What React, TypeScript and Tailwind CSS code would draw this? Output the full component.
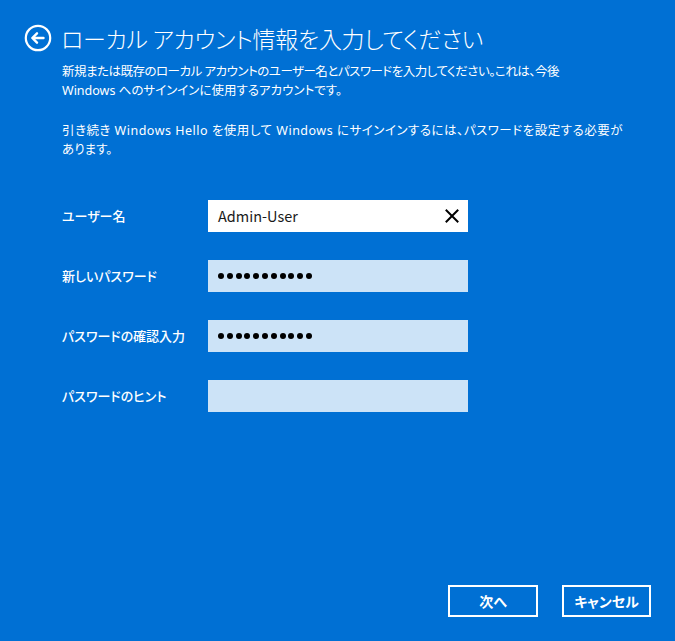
import React from "react";

const font = { fontFamily: '"Noto Sans CJK JP", "Noto Sans", sans-serif' };

function BackIcon() {
  return (
    <svg width="28" height="28" viewBox="0 0 28 28" fill="none" className="shrink-0">
      <circle cx="14" cy="14" r="12.2" stroke="white" strokeWidth="2.2" />
      <path d="M19.5 14H8.5M13 9.3L8.3 14L13 18.7" stroke="white" strokeWidth="2.4" strokeLinecap="round" strokeLinejoin="round" />
    </svg>
  );
}

function ClearIcon() {
  return (
    <svg width="14" height="14" viewBox="0 0 14 14" fill="none">
      <path d="M1.5 1.5L12.5 12.5M12.5 1.5L1.5 12.5" stroke="black" strokeWidth="2" strokeLinecap="square" />
    </svg>
  );
}

function Row({ label, children, white }: { label: string; children?: React.ReactNode; white?: boolean }) {
  return (
    <div className="flex items-center h-[32px]">
      <div className="w-[146px] text-[13px] font-medium text-white [font-feature-settings:'palt']">{label}</div>
      <div
        className={
          "w-[260px] h-[32px] flex items-center pl-[10px] pr-[9px] " +
          (white ? "bg-white" : "bg-[#cce3f7]")
        }
      >
        {children}
      </div>
    </div>
  );
}

function Dots() {
  return (
    <div className="flex gap-[2.8px] items-center">
      {Array.from({ length: 11 }).map((_, i) => (
        <span key={i} className="w-[6px] h-[6px] rounded-full bg-black inline-block" />
      ))}
    </div>
  );
}

export default function App() {
  return (
    <div className="w-[675px] h-[641px] bg-[#0070d4] flex flex-col text-white overflow-hidden" style={font}>
      <div className="flex items-center gap-[9px] pl-[24px] pt-[23px]">
        <BackIcon />
        <h1 className="text-[23px] tracking-[-0.3px] font-light leading-[30px] whitespace-nowrap [font-feature-settings:'palt']">
          ローカル アカウント情報を入力してください
        </h1>
      </div>
      <div
        className="pl-[62px] mt-[9px] text-[12.5px] leading-[19px] whitespace-nowrap [font-feature-settings:'palt'] [font-family:'Noto_Sans','Noto_Sans_CJK_JP',sans-serif]"
      >
        <p>
          <span className="tracking-[-0.5px]">
            新規または既存のローカル アカウントのユーザー名とパスワードを入力してください。これは、今後
          </span>
          <br />
          Windows へのサインインに使用するアカウントです。
        </p>
        <p className="mt-[21px]">
          <span className="tracking-[0.5px]">
            引き続き Windows Hello を使用して Windows にサインインするには、パスワードを設定する必要が
          </span>
          <br />
          あります。
        </p>
      </div>
      <div className="pl-[62px] mt-[41px] flex flex-col gap-[28px]">
        <Row label="ユーザー名" white>
          <span className="flex-1 text-[14.5px] text-[#1a1a1a]">Admin-User</span>
          <ClearIcon />
        </Row>
        <Row label="新しいパスワード">
          <Dots />
        </Row>
        <Row label="パスワードの確認入力">
          <Dots />
        </Row>
        <Row label="パスワードのヒント" />
      </div>
      <div className="mt-auto mb-[24px] mr-[24px] flex justify-end gap-[24px]">
        <button className="w-[90px] h-[32px] border-2 border-white text-white text-[14px] font-bold flex items-center justify-center [font-feature-settings:'palt']">
          次へ
        </button>
        <button className="w-[89px] h-[32px] border-2 border-white text-white text-[14px] font-bold flex items-center justify-center [font-feature-settings:'palt']">
          キャンセル
        </button>
      </div>
    </div>
  );
}
